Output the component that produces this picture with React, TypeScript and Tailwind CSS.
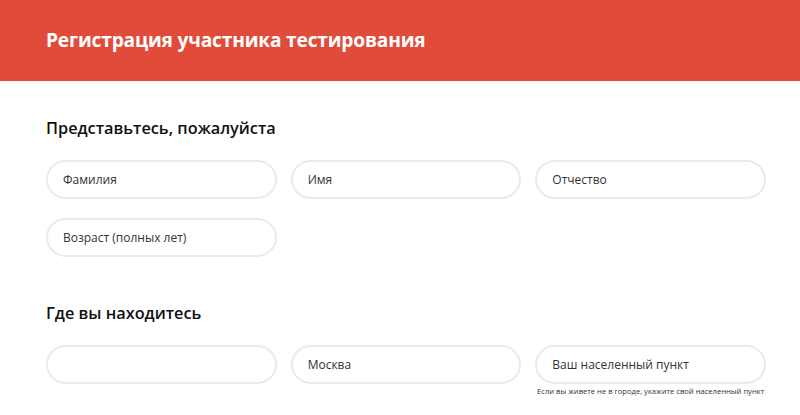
export default function App() {
    const field = "h-[39px] w-full rounded-full border-2 border-[#ebebeb] bg-white px-[15px] text-[12px] text-[#333] placeholder:text-[#333] outline-none";

    return (
        <div className="min-h-screen bg-white font-['Open_Sans',sans-serif]">
            <header className="flex h-[81px] items-center bg-[#e04c39] px-[46px] shadow-[0_1px_2px_rgba(0,0,0,0.08)]">
                <h1 className="text-[19.2px] font-bold tracking-[-0.2px] text-white">Регистрация участника тестирования</h1>
            </header>
            <main className="px-[34px] pt-[35px]">
                <div className="px-[12px]">
                    <h2 className="text-[16.3px] leading-[24px] font-semibold text-[#111]">Представьтесь, пожалуйста</h2>
                    <div className="mt-[20px] grid grid-cols-3 gap-x-[14px] gap-y-[19px] w-[720px]">
                        <input className={field} placeholder="Фамилия" />
                        <input className={field} placeholder="Имя" />
                        <input className={field} placeholder="Отчество" />
                        <input className={field} placeholder="Возраст (полных лет)" />
                    </div>
                    <h2 className="mt-[44px] text-[16.3px] leading-[24px] font-semibold text-[#111]">Где вы находитесь</h2>
                    <div className="mt-[20px] grid grid-cols-3 gap-x-[14px] w-[720px]">
                        <input className={field} />
                        <input className={field} defaultValue="Москва" />
                        <div>
                            <input className={field} placeholder="Ваш населенный пункт" />
                            <p className="mt-[2px] text-center text-[7.6px] text-[#333]">Если вы живете не в городе, укажите свой населенный пункт</p>
                        </div>
                    </div>
                </div>
            </main>
        </div>
    );
}
